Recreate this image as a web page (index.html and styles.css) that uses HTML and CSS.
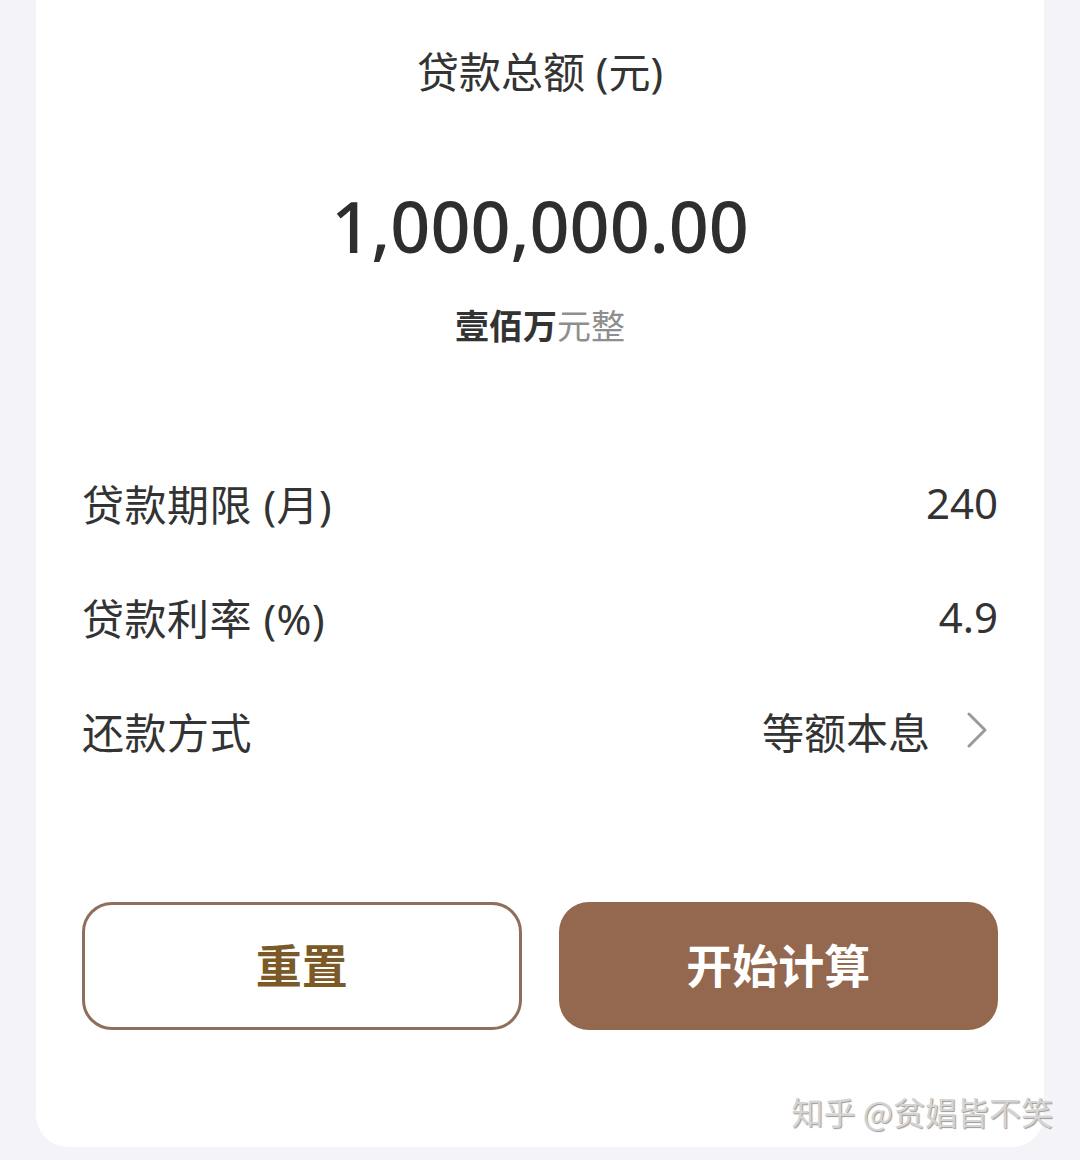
FILE: index.html
```html
<!DOCTYPE html>
<html lang="zh-CN">
<head>
    <meta charset="UTF-8">
    <meta name="viewport" content="width=device-width, initial-scale=1.0">
    <title>房贷计算器</title>
    <link rel="stylesheet" href="styles.css">
</head>
<body>

<div class="card">
    <div class="amount-title">贷款总额 (元)</div>
    <div class="amount-number">1,000,000.00</div>
    <div class="amount-words"><span class="strong">壹佰万</span><span class="light">元整</span></div>

    <div class="rows">
        <div class="row">
            <span class="label">贷款期限 (月)</span>
            <span class="value">240</span>
        </div>
        <div class="row">
            <span class="label">贷款利率 (%)</span>
            <span class="value">4.9</span>
        </div>
        <div class="row">
            <span class="label">还款方式</span>
            <span class="value select">
                等额本息
                <svg class="chevron" width="22" height="36" viewBox="0 0 22 36">
                    <path d="M3 2 L19 18 L3 34" fill="none" stroke="#9a9a9a" stroke-width="3" stroke-linecap="round" stroke-linejoin="round"/>
                </svg>
            </span>
        </div>
    </div>

    <div class="buttons">
        <button class="btn btn-reset">重置</button>
        <button class="btn btn-calc">开始计算</button>
    </div>

    <div class="watermark">知乎 @贫娼皆不笑</div>
</div>

</body>
</html>
```

FILE: styles.css
```css
body {
    margin: 0;
    background-color: #f4f4f8;
    font-family: "Noto Sans", "Noto Sans CJK SC", sans-serif;
    color: #333333;
}

.card {
    position: relative;
    margin: 0 36px;
    height: 1147px;
    box-sizing: border-box;
    padding: 43px 46px 0;
    background-color: #ffffff;
    border-radius: 0 0 32px 32px;
}

.amount-title {
    text-align: center;
    font-size: 42px;
    line-height: 58px;
    color: #333333;
}

.amount-number {
    margin-top: 80px;
    text-align: center;
    font-size: 70px;
    line-height: 90px;
    font-weight: 500;
    color: #2e2e2e;
}

.amount-words {
    margin-top: 31px;
    text-align: center;
    font-size: 34px;
    line-height: 48px;
}

.amount-words .strong {
    font-weight: bold;
    color: #333333;
}

.amount-words .light {
    color: #8e8e8e;
}

.rows {
    margin-top: 95px;
}

.row {
    display: flex;
    justify-content: space-between;
    align-items: center;
    height: 114px;
    font-size: 42px;
}

.label {
    letter-spacing: 0.5px;
}

.value {
    display: flex;
    align-items: center;
}

.chevron {
    margin-left: 36px;
    margin-right: 10px;
}

.buttons {
    display: grid;
    grid-template-columns: 1fr 1fr;
    gap: 37px;
    margin-top: 115px;
}

.btn {
    box-sizing: border-box;
    padding: 0 0 6px;
    height: 128px;
    border-radius: 30px;
    font-family: "Noto Sans CJK SC", sans-serif;
    font-size: 46px;
    font-weight: bold;
    line-height: 1;
    cursor: pointer;
}

.btn-reset {
    background-color: #ffffff;
    border: 3px solid #8f6f5c;
    color: #7b5a28;
}

.btn-calc {
    background-color: #94674f;
    border: none;
    color: #ffffff;
}

.watermark {
    position: absolute;
    right: -9px;
    bottom: 13px;
    font-family: "Noto Sans CJK SC", sans-serif;
    font-size: 32px;
    color: #d4d4d4;
    text-shadow: 1px 1px 1px #9a9a9a;
}
```
